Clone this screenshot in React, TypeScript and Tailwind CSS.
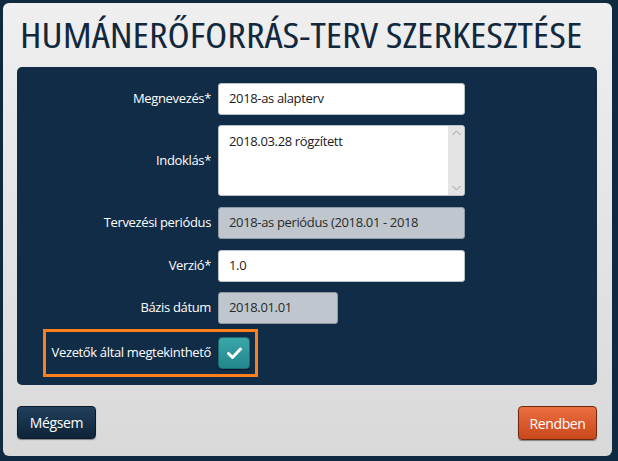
import React from 'react';

const FONT = "font-['Open_Sans',sans-serif] tracking-[-0.35px]";
const LABEL = `${FONT} text-[13px] text-white whitespace-nowrap`;

function Row({ label, children }: { label: string; children: React.ReactNode }) {
  return (
    <div className="flex items-center gap-[7px]">
      <div className={`w-[194px] text-right ${LABEL}`}>{label}</div>
      {children}
    </div>
  );
}

function TextInput({ value, width = 'w-[247px]', disabled = false }: { value: string; width?: string; disabled?: boolean }) {
  return (
    <div
      className={`${width} h-[32px] rounded-[3px] border flex items-center pl-[10px] overflow-hidden whitespace-nowrap ${FONT} text-[13px] ${
        disabled ? 'bg-[#bfc6cd] border-[#8f9aa4] text-[#2a2a2a]' : 'bg-white border-[#b9c0c6] text-[#1a1a1a]'
      }`}
    >
      {value}
    </div>
  );
}

export default function App() {
  return (
    <div className="w-[618px] h-[461px] overflow-hidden bg-[#0f2a40] pt-[3px] pl-[3px] pr-[6px] pb-[5px]">
      <div className="h-full rounded-[6px] bg-gradient-to-b from-[#efefef] to-[#d9d9d9] pl-[14px] pr-[15px] flex flex-col">
        {/* title */}
        <div className="h-[64px] pt-[12px] pl-[3px]">
          <h1 className="inline-block origin-left scale-x-[1.2] font-['Open_Sans',sans-serif] [font-stretch:75%] text-[34px] leading-[40px] text-[#12283d] whitespace-nowrap">
            HUMÁNERŐFORRÁS-TERV SZERKESZTÉSE
          </h1>
        </div>

        {/* form panel */}
        <div className="h-[318px] rounded-[5px] bg-[#112c46] pt-[16px] flex flex-col">
          <Row label="Megnevezés*">
            <TextInput value="2018-as alapterv" />
          </Row>

          <div className="mt-[10px]">
            <Row label="Indoklás*">
              <div className="w-[247px] h-[71px] rounded-[3px] border border-[#b9c0c6] bg-white flex overflow-hidden">
                <div className={`flex-1 pl-[10px] pt-[6px] ${FONT} text-[13px] text-[#1a1a1a]`}>
                  2018.03.28 rögzített
                </div>
                <div className="w-[16px] bg-[#e4e4e4] flex flex-col items-center justify-between py-[4px]">
                  <svg width="9" height="6" viewBox="0 0 9 6" fill="none" stroke="#9a9a9a" strokeWidth="1">
                    <path d="M0.5 5 L4.5 1 L8.5 5" />
                  </svg>
                  <svg width="9" height="6" viewBox="0 0 9 6" fill="none" stroke="#9a9a9a" strokeWidth="1">
                    <path d="M0.5 1 L4.5 5 L8.5 1" />
                  </svg>
                </div>
              </div>
            </Row>
          </div>

          <div className="mt-[11px]">
            <Row label="Tervezési periódus">
              <TextInput value="2018-as periódus (2018.01 - 2018" disabled />
            </Row>
          </div>

          <div className="mt-[11px]">
            <Row label="Verzió*">
              <TextInput value="1.0" />
            </Row>
          </div>

          <div className="mt-[10px]">
            <Row label="Bázis dátum">
              <TextInput value="2018.01.01" width="w-[120px]" disabled />
            </Row>
          </div>

          {/* highlighted checkbox row */}
          <div className="mt-[5px] ml-[26px] w-[215px] h-[48px] border-[3px] border-[#fd7f1c] flex items-center gap-[7px] pr-[5px]">
            <div className={`w-[165px] text-right ${LABEL}`}>Vezetők által megtekinthető</div>
            <div className="w-[32px] h-[32px] rounded-[4px] bg-gradient-to-b from-[#3aa7ab] to-[#23878c] border border-[#1b6b70] shadow-[0_1px_1px_rgba(0,0,0,0.5)] flex items-center justify-center">
              <svg width="15" height="12" viewBox="0 0 15 12">
                <path d="M1.5 6.5 L5.5 10.5 L13.5 2" fill="none" stroke="#ffffff" strokeWidth="3" strokeLinecap="round" strokeLinejoin="round" />
              </svg>
            </div>
          </div>
        </div>

        {/* buttons */}
        <div className="mt-[21px] flex justify-between">
          <button className={`w-[79px] h-[33px] rounded-[4px] bg-gradient-to-b from-[#21405c] to-[#0e2439] border border-[#0a1a2a] shadow-[0_1px_1px_rgba(0,0,0,0.4)] ${FONT} font-medium text-[14px] text-white`}>
            Mégsem
          </button>
          <button className={`w-[79px] h-[34px] rounded-[4px] bg-gradient-to-b from-[#ec6d3e] to-[#c8481b] border border-[#6e2a10] shadow-[0_1px_1px_rgba(0,0,0,0.4)] ${FONT} font-medium text-[14px] text-white`}>
            Rendben
          </button>
        </div>
      </div>
    </div>
  );
}
